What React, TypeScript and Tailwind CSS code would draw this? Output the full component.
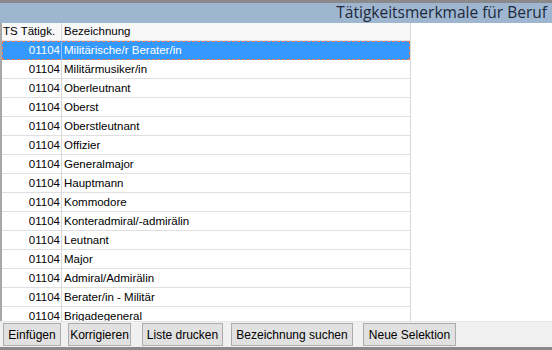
import React from "react";

const rows: string[] = [
  "Militärische/r Berater/in",
  "Militärmusiker/in",
  "Oberleutnant",
  "Oberst",
  "Oberstleutnant",
  "Offizier",
  "Generalmajor",
  "Hauptmann",
  "Kommodore",
  "Konteradmiral/-admirälin",
  "Leutnant",
  "Major",
  "Admiral/Admirälin",
  "Berater/in - Militär",
  "Brigadegeneral",
];

const buttons = [
  { label: "Einfügen", cls: "w-[58px] ml-0" },
  { label: "Korrigieren", cls: "w-[63px] ml-[7px]" },
  { label: "Liste drucken", cls: "w-[81px] ml-[11px]" },
  { label: "Bezeichnung suchen", cls: "w-[122px] ml-[8px]" },
  { label: "Neue Selektion", cls: "w-[93px] ml-[10px]" },
];

const App: React.FC = () => {
  const [selected, setSelected] = React.useState(0);

  return (
    <div
      className="w-[552px] h-[350px] flex flex-col bg-white overflow-hidden text-[11.5px] text-black"
      style={{ fontFamily: '"Liberation Sans", Arial, sans-serif' }}
    >
      <div className="h-[3px] bg-[#8a8a8a]" />
      <div className="h-[20px] bg-[#9fb6d1] flex items-center justify-end pr-[5px]">
        <span
          className="text-[15.5px] leading-none text-[#1c2a3a]"
          style={{ fontFamily: '"Open Sans", "Noto Sans", sans-serif' }}
        >
          Tätigkeitsmerkmale für Beruf
        </span>
      </div>

      <div className="flex-1 flex min-h-0 border-l-2 border-[#a8a8a8]">
        <div className="w-[409px] flex flex-col border-r border-[#d8d8d8] overflow-hidden">
          <div className="h-[18px] flex items-center bg-[#f8f8f8] border-b border-[#e2e2e2] shrink-0">
            <div className="w-[60px] pl-[1px] border-r border-[#d8d8d8] h-full flex items-center">TS Tätigk.</div>
            <div className="pl-[2px]">Bezeichnung</div>
          </div>
          {rows.map((name, i) => {
            const sel = i === selected;
            return (
              <div
                key={name}
                onClick={() => setSelected(i)}
                className={
                  sel
                    ? "h-[19px] shrink-0 flex items-start pt-[1px] leading-[14px] bg-[#3399ff] text-white border border-dashed border-[#f07a5a]"
                    : "h-[19px] shrink-0 flex items-start pt-[2px] leading-[14px] border-b border-[#e0e0e0]"
                }
              >
                <div
                  className={
                    sel
                      ? "w-[59px] h-[18px] -mt-[1px] pt-[1px] flex justify-end pr-[1px] border-r border-[#8cc4ff]"
                      : "w-[60px] h-[19px] -mt-[2px] pt-[2px] flex justify-end pr-[1px] border-r border-[#d8d8d8]"
                  }
                >
                  01104
                </div>
                <div className="pl-[2px]">{name}</div>
              </div>
            );
          })}
        </div>
        <div className="flex-1" />
      </div>

      <div className="h-[29px] shrink-0 bg-[#f0f0f0] border-t border-[#e6e6e6] flex items-start pl-[3px] pt-[1px] relative">
        {buttons.map((b) => (
          <button
            key={b.label}
            type="button"
            className={`${b.cls} h-[23px] px-0 bg-[#e1e1e1] border border-[#adadad] text-[12px] text-black leading-none whitespace-nowrap`}
          >
            {b.label}
          </button>
        ))}
        <div className="absolute left-0 right-0 bottom-0 h-[3px] bg-[#8a8a8a]" />
      </div>
    </div>
  );
};

export default App;
